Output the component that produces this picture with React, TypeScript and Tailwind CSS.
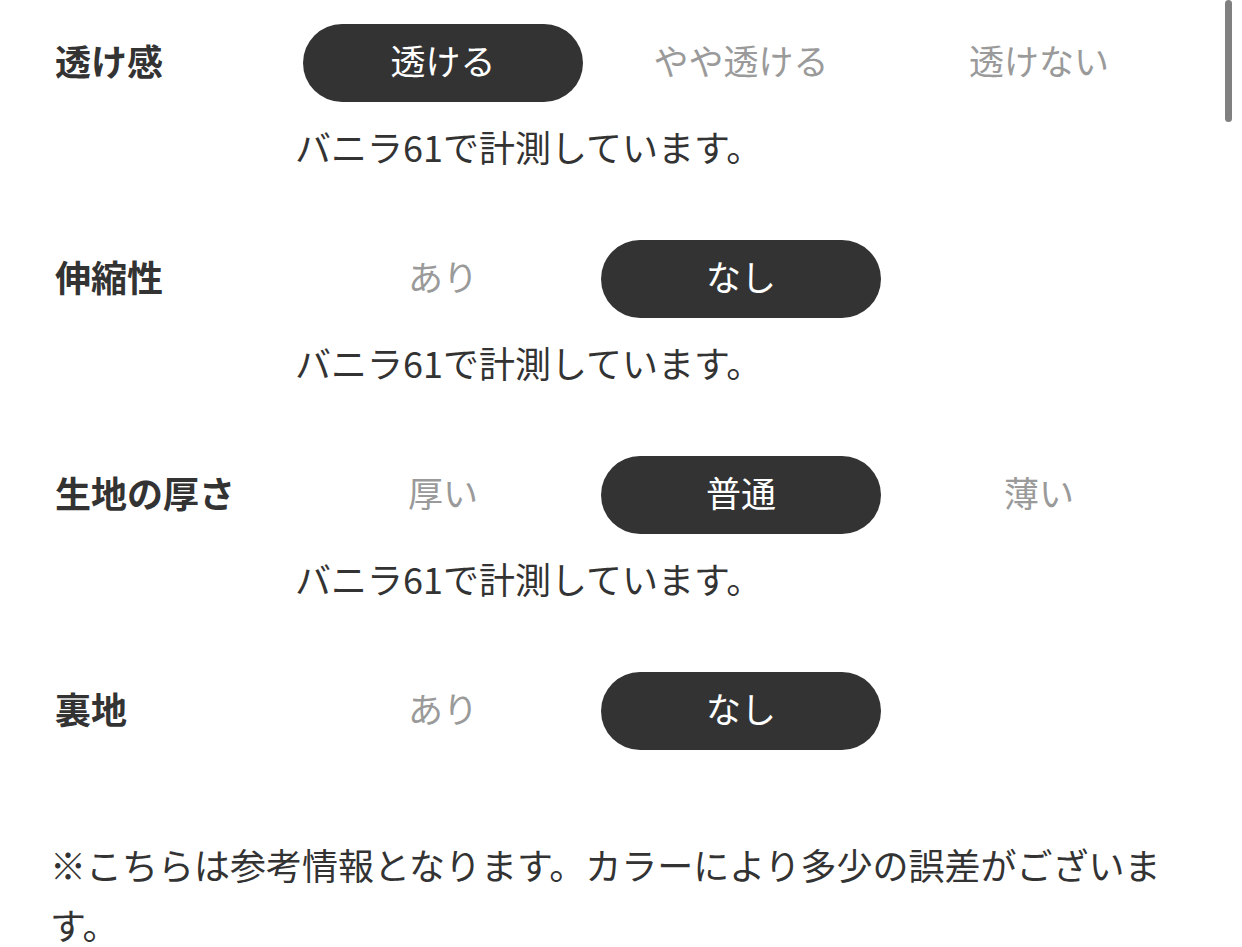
import React from 'react'

const rows = [
  { label: '透け感', options: ['透ける', 'やや透ける', '透けない'], selected: 0, note: true },
  { label: '伸縮性', options: ['あり', 'なし', ''], selected: 1, note: true },
  { label: '生地の厚さ', options: ['厚い', '普通', '薄い'], selected: 1, note: true },
  { label: '裏地', options: ['あり', 'なし', ''], selected: 1, note: false },
]

function Row({ label, options, selected, note }: { label: string; options: string[]; selected: number; note: boolean }) {
  return (
    <div className="flex flex-col">
      <div className="flex items-center">
        <div className="w-[248px] pb-[7px] text-[36px] font-bold text-[#333]">{label}</div>
        <div className="flex gap-[18px]">
          {options.map((opt, i) => (
            <div
              key={i}
              className={`w-[280px] h-[78px] pb-[6px] rounded-full flex items-center justify-center text-[35px] ${
                i === selected ? 'bg-[#333333] text-white' : 'text-[#9a9a9a]'
              }`}
            >
              {opt}
            </div>
          ))}
        </div>
      </div>
      {note && (
        <div className="ml-[240px] mt-[20px] h-[48px] leading-[48px] text-[36px] text-[#333]">
          バニラ61で計測しています。
        </div>
      )}
    </div>
  )
}

export default function App() {
  return (
    <div
      className="relative w-[1242px] h-[947px] overflow-hidden bg-white"
      style={{ fontFamily: '"Noto Sans CJK JP", "Noto Sans", sans-serif' }}
    >
      <div className="pl-[55px] pt-[24px] flex flex-col gap-[70px]">
        {rows.map((r) => (
          <Row key={r.label} {...r} />
        ))}
      </div>
      <p className="ml-[50px] mt-[84px] w-[1135px] text-[36px] leading-[60px] text-[#333]">
        ※こちらは参考情報となります。カラーにより多少の誤差がございます。
      </p>
      <div className="absolute right-[10px] top-0 w-[7px] h-[122px] rounded-full bg-[#808080]" />
    </div>
  )
}
